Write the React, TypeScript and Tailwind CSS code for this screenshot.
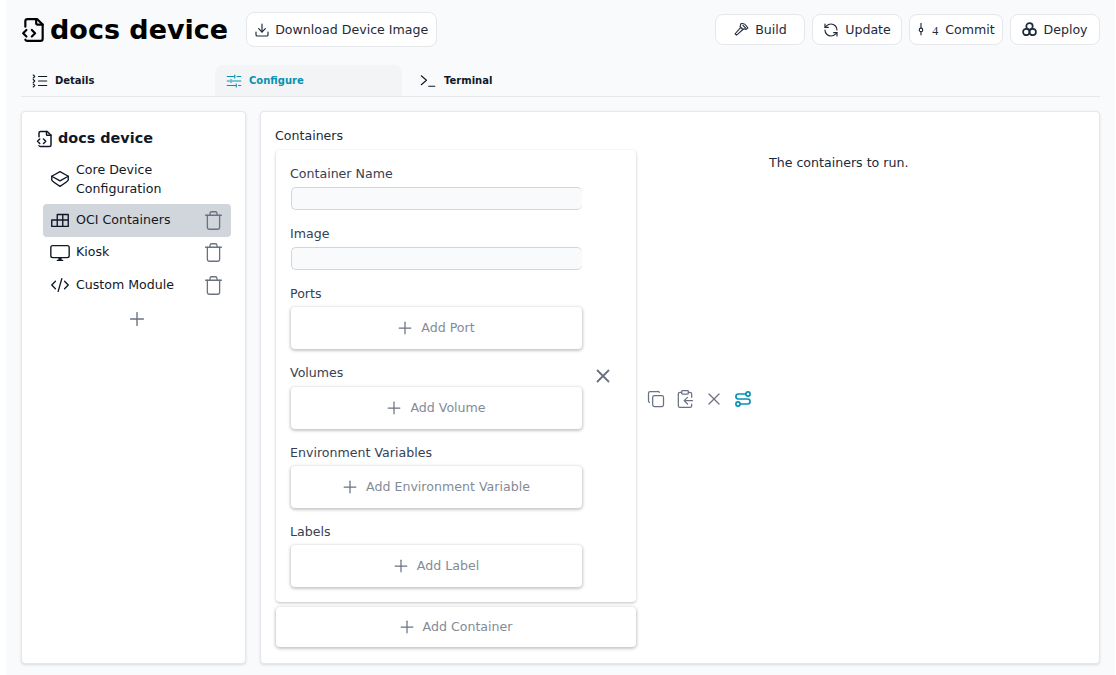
import { Plus, X, Trash, Download, RefreshCcw } from 'lucide-react';
import type { ReactNode } from 'react';

function FileCodeIcon({ className }: { className: string }) {
  return (
    <svg viewBox="1 0 24 24" fill="none" stroke="currentColor" strokeWidth="2" strokeLinecap="round" strokeLinejoin="round" className={className}>
      <path d="M5 9V4a2 2 0 0 1 2-2h9l5 5v13a2 2 0 0 1-2 2H7a2 2 0 0 1-2-1" />
      <path d="M15 2v4a1 1 0 0 0 1 1h5" />
      <path d="M6 12l-3 3 3 3" />
      <path d="M11 12l3 3-3 3" />
    </svg>
  );
}

function IconBase({ children, className }: { children: ReactNode; className?: string }) {
  return (
    <svg viewBox="0 0 24 24" fill="none" stroke="currentColor" strokeWidth="1.5" strokeLinecap="round" strokeLinejoin="round" className={className ?? 'w-[18px] h-[18px]'}>
      {children}
    </svg>
  );
}

function TopButton({ icon, label, className }: { icon: ReactNode; label: ReactNode; className: string }) {
  return (
    <button className={`flex items-center justify-center h-[31px] bg-white border border-gray-200 rounded-lg text-[12.6px] text-gray-800 ${className}`}>
      {icon}
      <span className="pt-[1px]">{label}</span>
    </button>
  );
}

function Tab({ icon, label, active, className }: { icon: ReactNode; label: string; active?: boolean; className?: string }) {
  return (
    <div className={`flex items-center w-[187px] h-[31px] pl-[10px] rounded-t-lg text-[10px] font-bold ${active ? 'bg-gray-100 text-[#0891b2]' : 'text-gray-900'} ${className ?? 'gap-[6px]'}`}>
      {icon}
      {label}
    </div>
  );
}

function NavRow({ icon, label, active }: { icon: ReactNode; label: string; active?: boolean }) {
  return (
    <div className={`flex items-center h-[32.5px] pl-[6px] pr-[7px] rounded ${active ? 'bg-gray-300' : ''}`}>
      <span className="w-[22px] flex justify-center text-gray-900">{icon}</span>
      <span className="ml-[5px] text-[12.6px] text-gray-900">{label}</span>
      <Trash className="ml-auto w-[21px] h-[21px] text-gray-500" strokeWidth={1.5} />
    </div>
  );
}

function FieldLabel({ label, className }: { label: string; className: string }) {
  return <div className={`-ml-px text-[12.6px] text-gray-700 leading-[18px] ${className}`}>{label}</div>;
}

function Field({ label }: { label: string }) {
  return (
    <div className="mb-[13px]">
      <FieldLabel label={label} className="h-[24px] pt-[2px]" />
      <div className="w-[291px] h-[23px] bg-gray-50 border border-gray-300 rounded-[5px] border-r-0" />
    </div>
  );
}

function AddBox({ label, className }: { label: string; className: string }) {
  return (
    <button className={`flex items-center justify-center gap-[6px] pr-[3px] bg-white rounded shadow-[0_1px_3px_1px_rgba(0,0,0,0.22)] text-[12.6px] text-[#848b98] ${className}`}>
      <Plus className="w-[20px] h-[20px] text-gray-500" strokeWidth={1.5} />
      {label}
    </button>
  );
}

export default function App() {
  return (
    <div className="h-[675px] overflow-hidden bg-white pl-[6px] pr-[1px] font-['DejaVu_Sans',sans-serif]">
      <div className="h-full bg-gray-50 pl-[15px] pr-[15px] pt-3">
        <header className="flex items-center h-[35px]">
          <FileCodeIcon className="w-[26px] h-[26px] text-black" />
          <h1 className="ml-[3px] text-[27px] leading-none font-bold text-black">docs device</h1>
          <button className="ml-[18px] flex items-center gap-[5px] h-[35px] pl-[7px] pr-[8px] bg-white border border-gray-200 rounded-lg text-[12.6px] text-gray-800">
            <Download className="w-4 h-4" strokeWidth={1.75} />
            <span className="pt-[1px]">Download Device Image</span>
          </button>
          <div className="ml-auto flex gap-[7px] self-start pt-[2px]">
            <TopButton className="w-[90px] gap-[5px]" label="Build" icon={
              <IconBase className="w-[17px] h-[17px]">
                <path d="M14 6l4 4" /><path d="M11 4c3-1 6 0 8 3l2 3-3 2-2-1-2 1-4-4 1-4z" /><path d="M11 9l-8 9 2 2 9-8" />
              </IconBase>
            } />
            <TopButton className="w-[90px] gap-[6px]" label="Update" icon={<RefreshCcw className="w-4 h-4" strokeWidth={1.75} />} />
            <TopButton className="w-[94px]" label={<span className="ml-[7px]">Commit</span>} icon={
              <span className="flex items-center gap-[7px] text-[12px] font-['Liberation_Serif',serif]">
                <svg viewBox="0 0 8 16" fill="none" stroke="currentColor" strokeWidth="1.3" className="w-2 h-[14px] -mt-[2px]">
                  <circle cx="4" cy="9" r="2" /><path d="M4 1v6M4 11v4" />
                </svg>
                <span className="pt-[2px]">4</span>
              </span>
            } />
            <TopButton className="w-[90px] gap-[6px]" label="Deploy" icon={
              <svg viewBox="1.5 1.5 21 21" fill="none" stroke="currentColor" strokeWidth="2.4" className="w-[15px] h-[15px]">
                <circle cx="12" cy="7.5" r="4.5" /><circle cx="7.5" cy="15.5" r="4.5" /><circle cx="16.5" cy="15.5" r="4.5" />
              </svg>
            } />
          </div>
        </header>

        <nav className="flex gap-[7px] mt-[18px] border-b border-gray-200 h-[32px]">
          <Tab label="Details" icon={
            <IconBase>
              <path d="M10 6h11M10 12h11M10 18h11" /><path d="M3 4l2 2-2 2M3 10l2 2-2 2M3 16l2 2-2 2" />
            </IconBase>
          } />
          <Tab active label="Configure" icon={
            <IconBase>
              <path d="M3 6h9M16 6h5M3 12h3M10 12h11M3 18h11M18 18h3" /><path d="M13 4v4M8 10v4M15 16v4" />
            </IconBase>
          } />
          <Tab label="Terminal" className="gap-[7px]" icon={
            <IconBase>
              <path d="M3 5l7 6-7 6" /><path d="M13 19h8" />
            </IconBase>
          } />
        </nav>

        <main className="flex gap-[14px] mt-[14px] h-[553px]">
          <aside className="w-[225px] bg-white rounded border border-gray-200 shadow-sm pl-[21px] pr-[14px] pt-[17px]">
            <div className="flex items-center gap-[4px] -ml-[7px] h-5">
              <FileCodeIcon className="w-[18px] h-[18px] text-gray-900" />
              <span className="text-[14.4px] font-bold text-gray-900">docs device</span>
            </div>
            <div className="mt-[11px] flex items-center h-[38px] px-[6px] text-[12.6px] leading-[19px] text-gray-900">
              <span className="w-[22px] flex justify-center">
                <IconBase className="w-[22px] h-[22px]">
                  <path d="M12 4l9 5-9 5-9-5 9-5z" /><path d="M3 9v4c0 1 9 7 9 7s9-6 9-7V9" />
                </IconBase>
              </span>
              <span className="ml-[5px]">Core Device<br />Configuration</span>
            </div>
            <div className="mt-[6px] flex flex-col">
              <NavRow active label="OCI Containers" icon={
                <IconBase className="w-[22px] h-[22px]">
                  <path d="M3 12h6v7H3zM9 12h6v7H9zM15 12h6v7h-6zM9 6h6v6H9zM15 6h6v6h-6z" />
                </IconBase>
              } />
              <NavRow label="Kiosk" icon={
                <IconBase className="w-[22px] h-[22px]">
                  <rect x="2" y="4" width="20" height="13" rx="2" /><path d="M9 20h6M11 17h2v3h-2z" fill="currentColor" />
                </IconBase>
              } />
              <NavRow label="Custom Module" icon={
                <IconBase className="w-[22px] h-[22px]">
                  <path d="M7 8l-4 4 4 4M17 8l4 4-4 4M14 5l-4 14" />
                </IconBase>
              } />
            </div>
            <div className="flex justify-center mt-[6px]">
              <Plus className="w-[22px] h-[22px] text-gray-500" strokeWidth={1.5} />
            </div>
          </aside>

          <section className="flex-1 bg-white rounded border border-gray-200 shadow-sm pl-[15px] pt-[15px]">
            <div className="-ml-px text-[12.6px] leading-[18px] text-gray-800">Containers</div>
            <div className="flex mt-[5px]">
              <div className="w-[360px]">
                <div className="relative h-[452px] bg-white rounded shadow-[0_1px_3px_0_rgba(0,0,0,0.25)] pl-[15px] pt-[13px]">
                  <Field label="Container Name" />
                  <Field label="Image" />
                  <FieldLabel label="Ports" className="h-[24px] pt-[2px]" />
                  <AddBox label="Add Port" className="w-[291px] h-[42px]" />
                  <FieldLabel label="Volumes" className="h-[38px] pt-[15px]" />
                  <AddBox label="Add Volume" className="w-[291px] h-[42px]" />
                  <FieldLabel label="Environment Variables" className="h-[37px] pt-[15px]" />
                  <AddBox label="Add Environment Variable" className="w-[291px] h-[42px]" />
                  <FieldLabel label="Labels" className="h-[37px] pt-[15px]" />
                  <AddBox label="Add Label" className="w-[291px] h-[42px]" />
                  <X className="absolute left-[316px] top-[215px] w-[22px] h-[22px] text-gray-500" strokeWidth={2} />
                </div>
                <AddBox label="Add Container" className="mt-[5px] w-[360px] h-[40px]" />
              </div>
              <div className="w-[133px] pl-[10px] flex items-center gap-[9px] h-[500px] pb-[2px] text-gray-500 self-start">
                <IconBase className="w-[20px] h-[20px]">
                  <rect x="8" y="8" width="13" height="13" rx="2" /><path d="M16 4a2 2 0 0 0-2-1H5a2 2 0 0 0-2 2v9a2 2 0 0 0 1 2" />
                </IconBase>
                <IconBase className="w-[20px] h-[20px]">
                  <rect x="8" y="2" width="8" height="4" rx="1" /><path d="M8 4H6a2 2 0 0 0-2 2v14a2 2 0 0 0 2 2h12a2 2 0 0 0 2-2v-2M16 4h2a2 2 0 0 1 2 2v4" /><path d="M21 14H11M15 10l-4 4 4 4" />
                </IconBase>
                <X className="w-[20px] h-[20px]" strokeWidth={1.5} />
                <svg viewBox="0 0 24 24" fill="none" stroke="currentColor" strokeWidth="2" strokeLinecap="round" className="w-[20px] h-[20px] text-[#0891b2]">
                  <path d="M15 6H6.5a3 3 0 0 0 0 6h11a3 3 0 0 1 0 6H9" /><circle cx="18" cy="6" r="2.5" /><circle cx="6" cy="18" r="2.5" />
                </svg>
              </div>
              <div className="pt-[4px] text-[12.6px] leading-[18px] text-gray-800">The containers to run.</div>
            </div>
          </section>
        </main>
      </div>
    </div>
  );
}
